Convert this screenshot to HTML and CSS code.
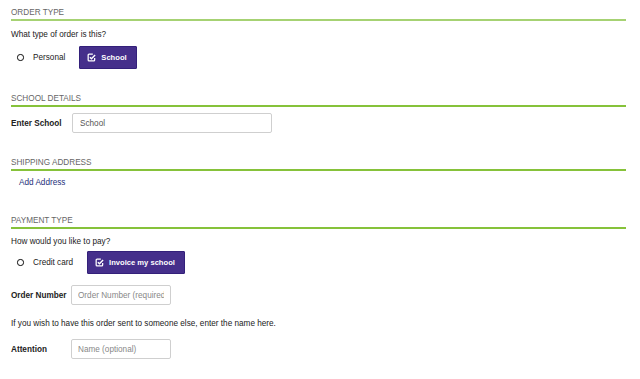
FILE: index.html
```html
<!DOCTYPE html>
<html lang="en">
<head>
    <meta charset="UTF-8">
    <title>Order</title>
    <link rel="stylesheet" href="styles.css">
</head>
<body>
    <div class="form">
        <div class="section first">
            <div class="section-title">Order Type</div>
            <p class="question">What type of order is this?</p>
            <div class="choice-row">
                <label class="radio"><span class="ring"></span>Personal</label>
                <button class="choice selected">
                    <svg class="check" viewBox="0 0 10 10" width="9" height="9"><path d="M8.5 5.5v2.2a1 1 0 0 1-1 1H2.3a1 1 0 0 1-1-1V2.3a1 1 0 0 1 1-1h4.2" fill="none" stroke="#fff" stroke-width="1.4"/><path d="M3.2 4.6l1.8 1.8 4-4.2" fill="none" stroke="#fff" stroke-width="1.6"/></svg>
                    School
                </button>
            </div>
        </div>

        <div class="section school">
            <div class="section-title">School Details</div>
            <div class="field-row school-row">
                <span class="field-label">Enter School</span>
                <input class="text-input wide" type="text" value="School">
            </div>
        </div>

        <div class="section shipping">
            <div class="section-title">Shipping Address</div>
            <a class="add-link" href="#">Add Address</a>
        </div>

        <div class="section payment">
            <div class="section-title">Payment Type</div>
            <p class="question pay">How would you like to pay?</p>
            <div class="choice-row pay-row">
                <label class="radio"><span class="ring"></span>Credit card</label>
                <button class="choice selected">
                    <svg class="check" viewBox="0 0 10 10" width="9" height="9"><path d="M8.5 5.5v2.2a1 1 0 0 1-1 1H2.3a1 1 0 0 1-1-1V2.3a1 1 0 0 1 1-1h4.2" fill="none" stroke="#fff" stroke-width="1.4"/><path d="M3.2 4.6l1.8 1.8 4-4.2" fill="none" stroke="#fff" stroke-width="1.6"/></svg>
                    Invoice my school
                </button>
            </div>
            <div class="field-row order-row">
                <span class="field-label">Order Number</span>
                <input class="text-input" type="text" placeholder="Order Number (required)">
            </div>
            <p class="note">If you wish to have this order sent to someone else, enter the name here.</p>
            <div class="field-row attention-row">
                <span class="field-label">Attention</span>
                <input class="text-input" type="text" placeholder="Name (optional)">
            </div>
        </div>
    </div>
</body>
</html>
```

FILE: styles.css
```css
body {
    margin: 0;
    background: #fff;
    font-family: "Liberation Sans", Arial, sans-serif;
    font-size: 8.2px;
    color: #222;
}
.form {
    padding: 8px 14px 0 11px;
}
.section {
    margin-top: 23px;
}
.section.first {
    margin-top: 0;
}
.section.school {
    margin-top: 25px;
}
.section.shipping {
    margin-top: 25px;
}
.section.payment {
    margin-top: 28px;
}
.section-title {
    text-transform: uppercase;
    color: #666;
    line-height: 10px;
    padding-bottom: 1px;
    border-bottom: 2px solid #86c23a;
}
.first .section-title {
    border-bottom-color: #a6d273;
}
.question {
    margin: 9px 0 0;
    line-height: 10px;
}
.question.pay {
    margin-top: 8px;
}
.choice-row {
    display: flex;
    align-items: center;
    margin-top: 6px;
}
.choice-row.pay-row {
    margin-top: 4px;
}
.radio {
    display: flex;
    align-items: center;
    padding-left: 6px;
    margin-right: 14px;
}
.ring {
    width: 5px;
    height: 5px;
    border: 1.6px solid #111;
    border-radius: 45%;
    margin-right: 9px;
}
.choice {
    display: flex;
    align-items: center;
    gap: 5px;
    height: 23px;
    padding: 0 9px 0 7px;
    font-family: inherit;
    font-size: 7.6px;
    font-weight: bold;
    color: #fff;
    background: #452f8b;
    border: 1px solid #33207a;
    border-radius: 1px;
}
.field-row {
    display: flex;
    align-items: center;
    margin-top: 9px;
}
.school-row {
    margin-top: 6px;
}
.order-row {
    margin-top: 11px;
}
.attention-row {
    margin-top: 10px;
}
.field-label {
    width: 60px;
    font-weight: bold;
}
.school-row .field-label {
    width: 61px;
}
.text-input {
    box-sizing: border-box;
    width: 100px;
    height: 20px;
    padding: 0 6px;
    border: 1px solid #cfcfcf;
    border-radius: 2px;
    font-family: inherit;
    font-size: 8.2px;
    color: #555;
}
.text-input::placeholder {
    color: #888;
}
.text-input.wide {
    width: 200px;
    padding-left: 7px;
}
.add-link {
    display: block;
    margin: 7px 0 0 8px;
    line-height: 10px;
    color: #25307a;
    text-decoration: none;
}
.note {
    margin: 14px 0 0;
    line-height: 10px;
}
```
